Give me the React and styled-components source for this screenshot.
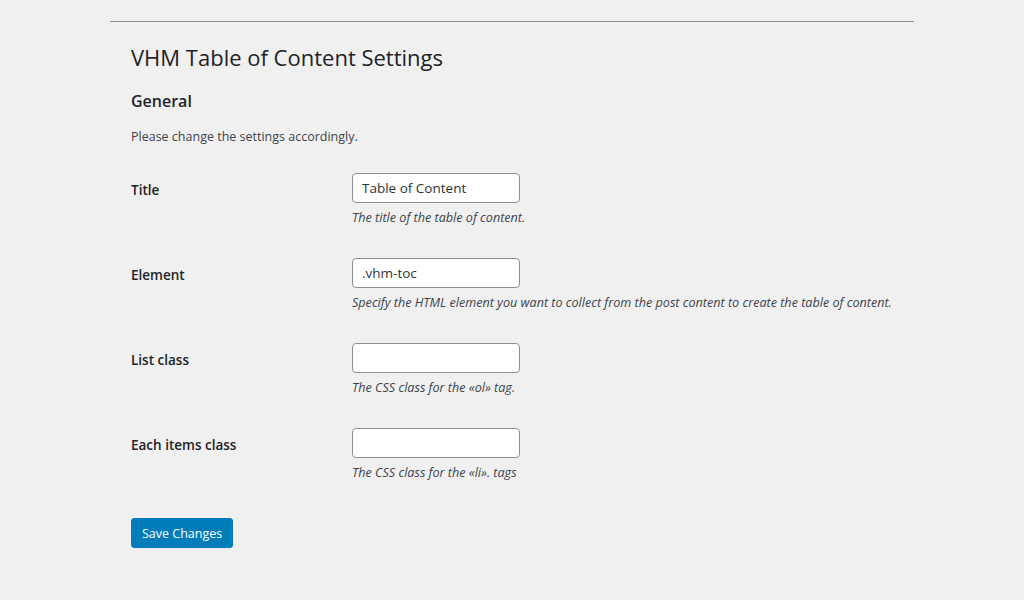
import React from "react";
import styled, { createGlobalStyle } from "styled-components";

const GlobalStyle = createGlobalStyle`
  html, body {
    margin: 0;
    padding: 0;
    background: #f0f0f1;
  }
  body {
    font-family: "Open Sans", "Noto Sans", sans-serif;
    color: #3c434a;
    font-size: 13px;
    line-height: 1.4;
  }
`;

const Page = styled.div`
  width: 1024px;
  height: 600px;
  overflow: hidden;
  padding: 21px 0 0 110px;
  box-sizing: border-box;
`;

const Wrap = styled.div`
  width: 804px;
  border-top: 1px solid #8c8f94;
  padding-left: 21px;
  box-sizing: border-box;
`;

const Heading = styled.h1`
  margin: 0;
  padding: 20px 0 4px;
  font-size: 22px;
  font-weight: 400;
  line-height: 30px;
  color: #1d2327;
`;

const Section = styled.h2`
  margin: 14px 0 0;
  font-size: 16px;
  font-weight: 600;
  line-height: 22px;
  color: #1d2327;
`;

const Intro = styled.p`
  margin: 15px 0 0;
  font-size: 12.5px;
  line-height: 20px;
`;

const Form = styled.form`
  margin-top: 11px;
`;

const Row = styled.div`
  display: grid;
  grid-template-columns: 221px 1fr;
  padding: 15px 0;
  height: 55px;
`;

const Label = styled.label`
  padding-top: 8px;
  font-size: 13.5px;
  font-weight: 600;
  line-height: 18px;
  color: #1d2327;
`;

const Field = styled.div`
  display: flex;
  flex-direction: column;
`;

const Input = styled.input`
  width: 168px;
  height: 30px;
  box-sizing: border-box;
  border: 1px solid #8c8f94;
  border-radius: 4px;
  background: #fff;
  padding: 0 9px;
  font-family: inherit;
  font-size: 13.5px;
  color: #2c3338;
  outline: none;
`;

const Description = styled.p`
  margin: 5px 0 0;
  font-size: 12.6px;
  font-style: italic;
  line-height: 19px;
  color: #3c434a;
`;

const SaveButton = styled.button`
  margin-top: 20px;
  height: 30px;
  padding: 0 10px;
  border: 1px solid #007cba;
  border-radius: 3px;
  background: #007cba;
  color: #fff;
  font-family: inherit;
  font-size: 12.5px;
  white-space: nowrap;
  cursor: pointer;
`;

const fields = [
  { label: "Title", value: "Table of Content", desc: "The title of the table of content." },
  {
    label: "Element",
    value: ".vhm-toc",
    desc: "Specify the HTML element you want to collect from the post content to create the table of content.",
  },
  { label: "List class", value: "", desc: "The CSS class for the «ol» tag." },
  { label: "Each items class", value: "", desc: "The CSS class for the «li». tags" },
];

export default function App() {
  return (
    <Page>
      <GlobalStyle />
      <Wrap>
        <Heading>VHM Table of Content Settings</Heading>
        <Section>General</Section>
        <Intro>Please change the settings accordingly.</Intro>
        <Form onSubmit={(e) => e.preventDefault()}>
          {fields.map((f) => (
            <Row key={f.label}>
              <Label>{f.label}</Label>
              <Field>
                <Input type="text" defaultValue={f.value} />
                <Description>{f.desc}</Description>
              </Field>
            </Row>
          ))}
          <SaveButton type="submit">Save Changes</SaveButton>
        </Form>
      </Wrap>
    </Page>
  );
}
